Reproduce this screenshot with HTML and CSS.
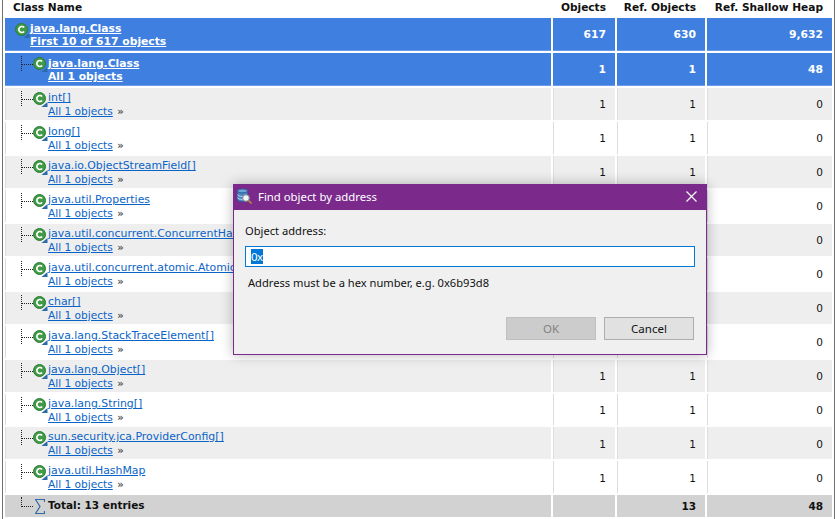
FILE: index.html
```html
<!DOCTYPE html>
<html lang="en">
<head>
<meta charset="utf-8">
<title>Find object by address</title>
<link rel="stylesheet" href="styles.css">
</head>
<body>
<svg class="defs" width="0" height="0" aria-hidden="true">
  <symbol id="cls" viewBox="0 0 16 16">
    <path d="M8.500 15L14.500 10v5z" fill="#2a6aa8"/>
    <circle cx="6.500" cy="6.500" r="6" fill="#3f9b45" stroke="#2d7a35"/>
    <path d="M9.100 4.500A3 3 0 1 0 9.100 8.500" fill="none" stroke="#fff" stroke-width="1.700"/>
  </symbol>
</svg>
<main class="table">
  <div class="row head">
    <div class="cell name">Class Name</div><div class="cell num">Objects</div><div class="cell num">Ref. Objects</div><div class="cell num">Ref. Shallow Heap</div>
  </div>
  <div class="row sel">
    <div class="cell name"><div class="entry root"><svg class="ic"><use href="#cls"/></svg><div class="txt"><a>java.lang.Class</a><a>First 10 of 617 objects</a></div></div></div>
    <div class="cell num">617</div><div class="cell num">630</div><div class="cell num">9,632</div>
  </div>
  <div class="row sel">
    <div class="cell name"><div class="entry"><i class="tree"></i><svg class="ic"><use href="#cls"/></svg><div class="txt"><a>java.lang.Class</a><a>All 1 objects</a></div></div></div>
    <div class="cell num">1</div><div class="cell num">1</div><div class="cell num">48</div>
  </div>
  <div class="row alt">
    <div class="cell name"><div class="entry"><i class="tree"></i><svg class="ic"><use href="#cls"/></svg><div class="txt"><a>int[]</a><span><a>All 1 objects</a> <b>»</b></span></div></div></div>
    <div class="cell num">1</div><div class="cell num">1</div><div class="cell num">0</div>
  </div>
  <div class="row">
    <div class="cell name"><div class="entry"><i class="tree"></i><svg class="ic"><use href="#cls"/></svg><div class="txt"><a>long[]</a><span><a>All 1 objects</a> <b>»</b></span></div></div></div>
    <div class="cell num">1</div><div class="cell num">1</div><div class="cell num">0</div>
  </div>
  <div class="row alt">
    <div class="cell name"><div class="entry"><i class="tree"></i><svg class="ic"><use href="#cls"/></svg><div class="txt"><a>java.io.ObjectStreamField[]</a><span><a>All 1 objects</a> <b>»</b></span></div></div></div>
    <div class="cell num">1</div><div class="cell num">1</div><div class="cell num">0</div>
  </div>
  <div class="row">
    <div class="cell name"><div class="entry"><i class="tree"></i><svg class="ic"><use href="#cls"/></svg><div class="txt"><a>java.util.Properties</a><span><a>All 1 objects</a> <b>»</b></span></div></div></div>
    <div class="cell num">1</div><div class="cell num">1</div><div class="cell num">0</div>
  </div>
  <div class="row alt">
    <div class="cell name"><div class="entry"><i class="tree"></i><svg class="ic"><use href="#cls"/></svg><div class="txt"><a>java.util.concurrent.ConcurrentHas</a><span><a>All 1 objects</a> <b>»</b></span></div></div></div>
    <div class="cell num">1</div><div class="cell num">1</div><div class="cell num">0</div>
  </div>
  <div class="row">
    <div class="cell name"><div class="entry"><i class="tree"></i><svg class="ic"><use href="#cls"/></svg><div class="txt"><a>java.util.concurrent.atomic.Atomic</a><span><a>All 1 objects</a> <b>»</b></span></div></div></div>
    <div class="cell num">1</div><div class="cell num">1</div><div class="cell num">0</div>
  </div>
  <div class="row alt">
    <div class="cell name"><div class="entry"><i class="tree"></i><svg class="ic"><use href="#cls"/></svg><div class="txt"><a>char[]</a><span><a>All 1 objects</a> <b>»</b></span></div></div></div>
    <div class="cell num">1</div><div class="cell num">1</div><div class="cell num">0</div>
  </div>
  <div class="row">
    <div class="cell name"><div class="entry"><i class="tree"></i><svg class="ic"><use href="#cls"/></svg><div class="txt"><a>java.lang.StackTraceElement[]</a><span><a>All 1 objects</a> <b>»</b></span></div></div></div>
    <div class="cell num">1</div><div class="cell num">1</div><div class="cell num">0</div>
  </div>
  <div class="row alt">
    <div class="cell name"><div class="entry"><i class="tree"></i><svg class="ic"><use href="#cls"/></svg><div class="txt"><a>java.lang.Object[]</a><span><a>All 1 objects</a> <b>»</b></span></div></div></div>
    <div class="cell num">1</div><div class="cell num">1</div><div class="cell num">0</div>
  </div>
  <div class="row short-row">
    <div class="cell name"><div class="entry"><i class="tree"></i><svg class="ic"><use href="#cls"/></svg><div class="txt"><a>java.lang.String[]</a><span><a>All 1 objects</a> <b>»</b></span></div></div></div>
    <div class="cell num">1</div><div class="cell num">1</div><div class="cell num">0</div>
  </div>
  <div class="row alt low">
    <div class="cell name"><div class="entry"><i class="tree"></i><svg class="ic"><use href="#cls"/></svg><div class="txt"><a>sun.security.jca.ProviderConfig[]</a><span><a>All 1 objects</a> <b>»</b></span></div></div></div>
    <div class="cell num">1</div><div class="cell num">1</div><div class="cell num">0</div>
  </div>
  <div class="row low">
    <div class="cell name"><div class="entry"><i class="tree"></i><svg class="ic"><use href="#cls"/></svg><div class="txt"><a>java.util.HashMap</a><span><a>All 1 objects</a> <b>»</b></span></div></div></div>
    <div class="cell num">1</div><div class="cell num">1</div><div class="cell num">0</div>
  </div>
  <div class="row total">
    <div class="cell name"><div class="entry"><i class="tree short"></i><svg class="sigma" viewBox="0 0 10 15"><path d="M9.500 3V.5H.5L5 7.500.5 14.500h9V12" fill="none" stroke="#2f6aa6" stroke-width="1.200"/></svg><strong>Total: 13 entries</strong></div></div>
    <div class="cell num"></div><div class="cell num">13</div><div class="cell num">48</div>
  </div>
</main>
<section class="dialog" role="dialog" aria-label="Find object by address">
  <header class="titlebar">
    <svg class="appicon" viewBox="0 0 16 16">
      <ellipse cx="6.500" cy="3" rx="5" ry="2" fill="#6fa4d8" stroke="#2b5f9a" stroke-width=".8"/>
      <path d="M1.500 3v8.500c0 1.100 2.200 2 5 2s5-.9 5-2V3c0 1.100-2.200 2-5 2s-5-.9-5-2z" fill="#4d86c4" stroke="#2b5f9a" stroke-width=".8"/>
      <path d="M1.500 6.500c0 1.100 2.200 2 5 2M1.500 9.500c0 1.100 2.200 2 5 2" fill="none" stroke="#cfe3f5" stroke-width=".8"/>
      <circle cx="10" cy="10" r="3.300" fill="#eef5fb" stroke="#8c8c8c"/>
      <path d="M12.500 12.500l3 3" stroke="#b5893c" stroke-width="1.600"/>
    </svg>
    <h1>Find object by address</h1>
    <svg class="close" viewBox="0 0 11 11"><path d="M.5.5l10 10M10.500.5l-10 10" stroke="#fff" stroke-width="1.200" fill="none"/></svg>
  </header>
  <div class="dlgbody">
    <label class="lbl">Object address:</label>
    <div class="input"><span class="selected">0x</span></div>
    <p class="msg">Address must be a hex number, e.g. 0x6b93d8</p>
    <div class="btns">
      <button class="btn off">OK</button>
      <button class="btn">Cancel</button>
    </div>
  </div>
</section>
</body>
</html>
```
FILE: styles.css
```css
* { box-sizing: border-box; }
html, body { margin: 0; height: 100%; }
body { width: 837px; height: 519px; overflow: hidden; background: #fff; position: relative; font-family: "DejaVu Sans", sans-serif; }
.defs { position: absolute; }
.table {
  height: 519px; margin-left: 2px; width: 833px;
  border-left: 1px solid #707070; border-right: 1px solid #707070;
  padding-left: 2px; padding-right: 1px;
  display: flex; flex-direction: column; gap: 2px;
  font-size: 10.5px; color: #111;
}
.row { display: grid; grid-template-columns: 546px 62px 88px 125px; column-gap: 2px; height: 32px; flex: none; }
.cell { background: #fff; box-shadow: inset 1px 0 0 #ddd; }
.num { padding-right: 9px; display: flex; align-items: center; justify-content: flex-end; }
.alt .cell { background: #eee; }
.low .num { padding-top: 1px; }
.head { height: 16px; }
.head .cell { background: #fff; box-shadow: none; font-weight: bold; font-size: 10.600px; line-height: 14px; }
.head .name { padding-left: 8px; }
.head .num { align-items: flex-start; }
.sel { height: 33px; }
.sel .cell { background: #3f7fdf; color: #fff; font-weight: bold; font-size: 10.750px; box-shadow: none; border-bottom: 1px solid #6b9be6; }
.sel a { color: #fff; font-weight: bold; }
.total .cell { background: #d2d2d2; font-weight: bold; box-shadow: none; }
.total { height: 22px; }
.short-row { height: 31px; }
.entry { display: flex; align-items: flex-start; padding-left: 16px; height: 100%; }
.root { padding-left: 10px; }
.tree { width: 12px; height: 15px; margin-top: 3px; flex: none; border-left: 1px dotted #222; position: relative; }
.tree::after { content: ""; position: absolute; left: 0; right: 0; top: 8px; border-top: 1px dotted #222; }
.tree.short { height: 10px; margin-top: 2px; }
.tree.short::after { top: 9px; }
.ic { width: 16px; height: 16px; margin-top: 4px; flex: none; }
.root .ic { margin-top: 5px; }
.txt { display: flex; flex-direction: column; line-height: 14px; margin-left: -1px; padding-top: 3px; white-space: nowrap; font-size: 10.900px; }
.txt > a:first-child { height: 13px; }
.sel .txt { padding-top: 4px; font-size: 10.750px; }
.txt span { font-size: 10.600px; }
a { color: #0a64c8; text-decoration: underline; }
.txt b { color: #555; font-weight: bold; font-size: 10px; margin-left: 1px; }
.sigma { width: 10px; height: 15px; margin: 4px 3px 0 2px; flex: none; }
.entry strong { margin-top: 4px; }
.dialog {
  position: absolute; left: 233px; top: 184px; width: 474px; height: 171px;
  background: #f0f0f0; border: 1px solid #7b2a8c;
  box-shadow: 0 0 12px rgba(0,0,0,.28);
  font-family: "Noto Sans", sans-serif; font-size: 11.150px; color: #111;
  display: flex; flex-direction: column;
}
.titlebar { height: 26px; flex: none; background: #7b2a8c; display: flex; align-items: center; padding: 0 10px 2px 3px; color: #fff; margin: -1px -1px 0; }
.appicon { width: 16px; height: 16px; flex: none; }
.titlebar h1 { margin: 0 0 0 6px; font: inherit; font-size: 11.350px; flex: 1; }
.close { width: 11px; height: 11px; flex: none; }
.dlgbody { flex: 1; padding: 13px 11px 0 11px; display: flex; flex-direction: column; }
.lbl { line-height: 16px; }
.input { height: 21px; margin-top: 7px; background: #fff; border: 1px solid #0078d7; padding: 2px 0 0 5px; }
.selected { display: inline-block; height: 15px; line-height: 15px; background: #0078d7; color: #fff; font-size: 11.500px; letter-spacing: -.6px; vertical-align: top; padding-right: 1px; }
.msg { margin: 8px 0 0 3px; line-height: 16px; }
.btns { display: flex; justify-content: flex-end; gap: 8px; margin: 26px 1px 0 0; }
.btn { width: 90px; height: 23px; padding: 0; background: #e1e1e1; border: 1px solid #adadad; font: inherit; font-size: 11.500px; color: #111; }
.btn.off { background: #ccc; border-color: #bfbfbf; color: #838383; }
```
